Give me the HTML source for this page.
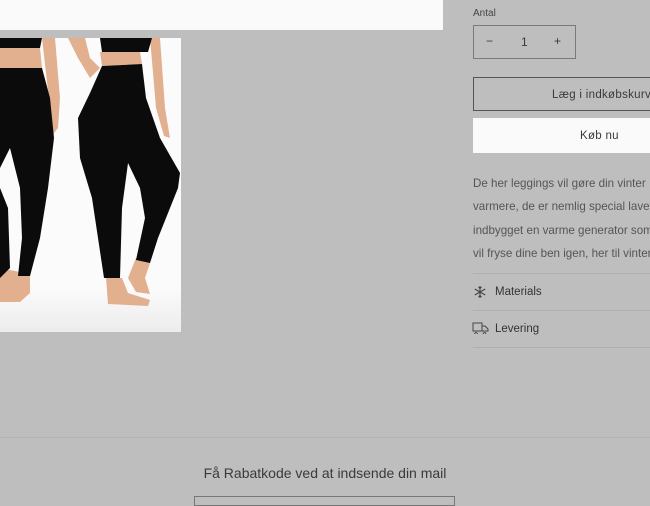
<!DOCTYPE html>
<html><head><meta charset="utf-8"><style>
*{margin:0;padding:0;box-sizing:border-box}
body{width:650px;height:500px;overflow:hidden;background:#bebebe;font-family:"Liberation Sans",sans-serif;color:#3a3a3a;position:relative}
.abs{position:absolute}
</style></head><body>
<div class="abs" style="left:0;top:0;width:443px;height:30px;background:#fafafa"></div>
<div class="abs" style="left:0;top:38px;width:181px;height:294px;background:linear-gradient(#fbfbfb 85%,#ececec)">
<svg width="181" height="294" viewBox="0 0 181 294">
<g fill="#e3b08f">
<path d="M0 10 L40 10 L42 30 L0 30Z"/>
<path d="M42 0 L55 0 L60 60 L58 90 L50 100 L46 92 L50 70 Z"/>
<path d="M68 0 L85 0 L90 20 L100 30 L90 40 L78 20Z"/>
<path d="M100 14 L140 14 L142 26 L102 28Z"/>
<path d="M150 0 L160 0 L165 70 L170 100 L164 98 L156 70Z"/>
<path d="M0 230 L30 236 L30 255 L20 264 L0 264Z"/>
<path d="M106 240 L122 240 L128 255 L150 262 L148 268 L108 266Z"/>
<path d="M136 220 L150 225 L145 240 L150 256 L136 254 L128 240Z"/>
</g>
<g fill="#0b0b0b">
<path d="M0 0 L42 0 L40 10 L0 10Z"/>
<path d="M100 0 L152 0 L148 14 L102 14Z"/>
<path d="M0 30 L42 30 L50 60 L54 100 L48 150 L40 200 L30 238 L18 238 L22 200 L20 150 L10 110 L0 130Z"/>
<path d="M0 150 L8 170 L10 230 L0 240Z"/>
<path d="M102 28 L142 26 L146 60 L160 100 L180 135 L178 150 L158 200 L150 225 L136 222 L145 180 L140 150 L128 125 L122 170 L120 240 L104 240 L98 200 L92 160 L80 120 L78 80 L90 55Z"/>
</g>
</svg>
</div>
<div class="abs" style="left:473px;top:8px;font-size:10px;color:#444">Antal</div>
<div class="abs" style="left:473px;top:25px;width:103px;height:34px;border:1px solid #7a7a7a;font-size:12px">
<span class="abs" style="left:12px;top:8px">−</span>
<span class="abs" style="left:47px;top:9px">1</span>
<span class="abs" style="left:80px;top:8px">+</span>
</div>
<div class="abs" style="left:473px;top:77px;width:190px;height:34px;border:1px solid #555;font-size:11.5px;letter-spacing:0.3px;padding:11px 0 0 78px;white-space:nowrap">Læg i indkøbskurv</div>
<div class="abs" style="left:473px;top:118px;width:190px;height:35px;background:#fafafa;font-size:11.5px;letter-spacing:0.3px;padding:12px 0 0 107px">Køb nu</div>
<div class="abs" style="left:473px;top:172px;width:200px;font-size:11.6px;line-height:23.3px;white-space:nowrap;color:#555">De her leggings vil gøre din vinter<br>varmere, de er nemlig special lavet<br>indbygget en varme generator som<br>vil fryse dine ben igen, her til vinter</div>
<div class="abs" style="left:473px;top:273px;width:180px;border-top:1px solid #b0b0b0"></div>
<div class="abs" style="left:473px;top:310px;width:180px;border-top:1px solid #b0b0b0"></div>
<div class="abs" style="left:473px;top:347px;width:180px;border-top:1px solid #b0b0b0"></div>
<svg class="abs" style="left:473px;top:285px" width="14" height="14" viewBox="0 0 14 14" stroke="#444" stroke-width="1.1" fill="none"><path d="M7 1V13M1.8 4L12.2 10M1.8 10L12.2 4M5.5 2L7 3.5L8.5 2M5.5 12L7 10.5L8.5 12"/></svg>
<div class="abs" style="left:495px;top:286px;font-size:11.5px;color:#333">Materials</div>
<svg class="abs" style="left:472px;top:322px" width="17" height="12" viewBox="0 0 17 12" stroke="#444" stroke-width="1" fill="none"><path d="M1 1H10V9H1ZM10 4H13L16 7V9H10M4 10.5a1.3 1.3 0 1 0 .1 0M12.5 10.5a1.3 1.3 0 1 0 .1 0"/></svg>
<div class="abs" style="left:495px;top:323px;font-size:11.5px;color:#333">Levering</div>
<div class="abs" style="left:0;top:437px;width:650px;border-top:1px solid #b3b3b3"></div>
<div class="abs" style="left:0;top:465px;width:650px;text-align:center;font-size:14px;color:#3a3a3a">Få Rabatkode ved at indsende din mail</div>
<div class="abs" style="left:194px;top:496px;width:261px;height:10px;border:1px solid #777"></div>
</body></html>
